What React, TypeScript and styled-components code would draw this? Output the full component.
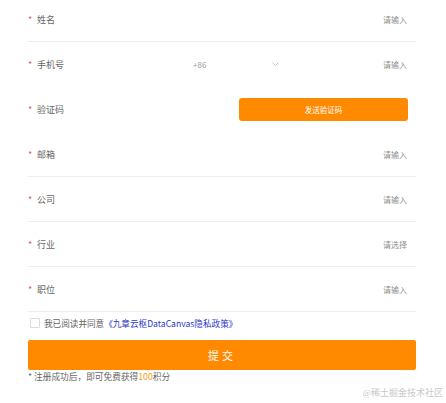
import styled, { createGlobalStyle } from "styled-components";

const GlobalStyle = createGlobalStyle`
  html, body {
    margin: 0;
    padding: 0;
    background: #fff;
    font-family: "Noto Sans CJK SC", "Noto Sans", sans-serif;
  }
`;

const Page = styled.div`
  position: relative;
  width: 446px;
  height: 403px;
  overflow: hidden;
  background: #fff;
`;

const Form = styled.div`
  display: flex;
  flex-direction: column;
  margin: -3px 30px 0 28px;
`;

const Row = styled.div<{ $divider?: boolean }>`
  display: flex;
  align-items: center;
  height: 44px;
  border-bottom: 1px solid ${(p) => (p.$divider ? "#ededed" : "transparent")};
`;

const Label = styled.div`
  display: flex;
  align-items: center;
  width: 165px;
  flex-shrink: 0;
  font-size: 9px;
  color: #666;
`;

const Star = styled.span`
  width: 9px;
  color: #e05a7f;
  font-size: 9px;
`;

const Input = styled.input`
  flex: 1;
  min-width: 0;
  border: none;
  outline: none;
  background: transparent;
  text-align: right;
  padding: 0 9px 0 0;
  font-family: inherit;
  font-size: 8px;
  color: #333;

  &::placeholder {
    color: #8f8f8f;
  }
`;

const Select = styled.div`
  display: flex;
  align-items: center;
  justify-content: space-between;
  width: 86px;
  padding-right: 2px;
  font-size: 8px;
  color: #9a9a9a;
`;

const Action = styled.div`
  flex: 1;
  display: flex;
  justify-content: flex-end;
  padding-right: 8px;
`;

const CodeButton = styled.button`
  width: 169px;
  height: 23px;
  border: none;
  border-radius: 3px;
  background: #ff8a00;
  color: #fff;
  font-family: inherit;
  font-size: 7.5px;
  cursor: pointer;
`;

const Agreement = styled.label`
  display: flex;
  align-items: center;
  gap: 4px;
  margin: 5px 0 0 2px;
  height: 11px;
  font-size: 8.6px;
  color: #666;
`;

const Box = styled.span`
  width: 10px;
  height: 10px;
  box-sizing: border-box;
  border: 1px solid #dcdcdc;
  border-radius: 1px;
  background: #fff;
`;

const Link = styled.a`
  color: #2a37c9;
  text-decoration: none;
`;

const Submit = styled.button`
  margin-top: 12px;
  height: 30px;
  border: none;
  border-radius: 2px;
  background: #ff8a00;
  color: #fff;
  font-family: inherit;
  font-size: 11px;
  letter-spacing: 3px;
  cursor: pointer;
`;

const Note = styled.div`
  margin-top: 1px;
  font-size: 8.7px;
  line-height: 11px;
  color: #666;
`;

const Points = styled.span`
  color: #f0a020;
`;

const Watermark = styled.div`
  position: absolute;
  right: 3px;
  bottom: 4px;
  font-family: "Liberation Serif", "Noto Sans CJK SC", serif;
  font-size: 9px;
  color: #c8c8c8;
`;

const Chevron = () => (
  <svg width="7" height="4" viewBox="0 0 7 4" fill="none">
    <path d="M0.5 0.5 L3.5 3.5 L6.5 0.5" stroke="#bdbdbd" strokeWidth="0.8" />
  </svg>
);

const fields = [
  { label: "邮箱", placeholder: "请输入" },
  { label: "公司", placeholder: "请输入" },
  { label: "行业", placeholder: "请选择" },
  { label: "职位", placeholder: "请输入" },
];

const App = () => {
  return (
    <Page>
      <GlobalStyle />
      <Form>
        <Row $divider>
          <Label>
            <Star>*</Star>姓名
          </Label>
          <Input placeholder="请输入" />
        </Row>
        <Row>
          <Label>
            <Star>*</Star>手机号
          </Label>
          <Select>
            +86
            <Chevron />
          </Select>
          <Input placeholder="请输入" />
        </Row>
        <Row>
          <Label>
            <Star>*</Star>验证码
          </Label>
          <Action>
            <CodeButton>发送验证码</CodeButton>
          </Action>
        </Row>
        {fields.map((f) => (
          <Row $divider key={f.label}>
            <Label>
              <Star>*</Star>
              {f.label}
            </Label>
            <Input placeholder={f.placeholder} />
          </Row>
        ))}
        <Agreement>
          <Box />
          <span>
            我已阅读并同意<Link href="#">《九章云枢DataCanvas隐私政策》</Link>
          </span>
        </Agreement>
        <Submit>提交</Submit>
        <Note>
          * 注册成功后，即可免费获得<Points>100</Points>积分
        </Note>
      </Form>
      <Watermark>@稀土掘金技术社区</Watermark>
    </Page>
  );
};

export default App;
